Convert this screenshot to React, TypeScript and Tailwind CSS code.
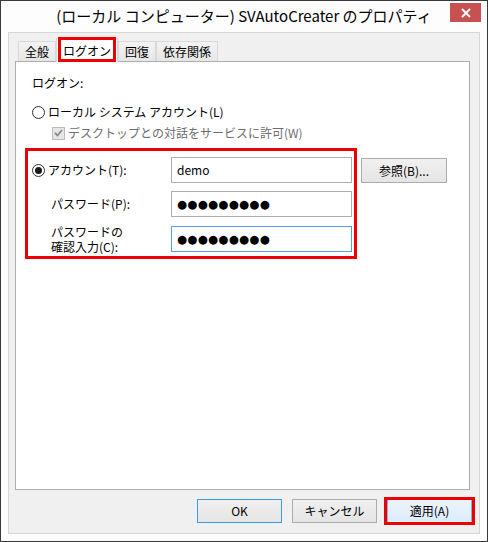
import React from "react";

const font = "font-['Noto_Sans_CJK_JP','Noto_Sans',sans-serif]";

function Radio({ checked }: { checked?: boolean }) {
  return (
    <span className="w-[13px] h-[13px] rounded-full border border-[#333333] bg-white flex items-center justify-center shrink-0">
      {checked && <span className="w-[7px] h-[7px] rounded-full bg-[#1a1a1a]" />}
    </span>
  );
}

function Tab({ label, selected }: { label: string; selected?: boolean }) {
  if (selected) {
    return (
      <div className="relative z-10 -mb-px h-[24px] bg-white border border-b-0 border-[#d9d9d9] px-[6px] flex items-center text-[12px] leading-[16px] text-black">
        {label}
        <div className="absolute left-[1px] right-[1px] top-[-2px] bottom-0 border-[3px] border-[#ee0000]" />
      </div>
    );
  }
  return (
    <div className="h-[20px] bg-gradient-to-b from-[#f3f3f3] to-[#e6e6e6] border border-b-0 border-[#d9d9d9] px-[6px] flex items-center text-[12px] leading-[16px] text-black">
      {label}
    </div>
  );
}

function Btn({ label, variant }: { label: string; variant?: "default" | "hover" }) {
  const cls =
    variant === "default"
      ? "border-[#3c9ae6] bg-gradient-to-b from-[#f0f0f0] to-[#e5e5e5]"
      : variant === "hover"
      ? "border-[#7eb4ea] bg-gradient-to-b from-[#ecf4fc] to-[#dcecfc]"
      : "border-[#acacac] bg-gradient-to-b from-[#f0f0f0] to-[#e5e5e5]";
  return (
    <div className={`w-[85px] h-[24px] border ${cls} flex items-center justify-center text-[12px] leading-[16px] text-black`}>
      {label}
    </div>
  );
}

function Input({ children, focused }: { children?: React.ReactNode; focused?: boolean }) {
  return (
    <div
      className={`w-[181px] h-[26px] border ${focused ? "border-[#569de5]" : "border-[#abadb3]"} bg-white flex items-center px-[5px] text-[12px] leading-[16px] text-black`}
    >
      {children}
    </div>
  );
}

function Dots() {
  return (
    <span className="font-['DejaVu_Sans',sans-serif] text-[11.5px] tracking-[0.3px] leading-[16px] text-black">
      ●●●●●●●●●
    </span>
  );
}

export default function App() {
  return (
    <div className={`w-[488px] h-[542px] bg-[#fdfdfd] border border-[#3a3a3a] flex flex-col ${font}`}>
      {/* title bar */}
      <div className="h-[31px] grid grid-cols-[1fr_auto_1fr]">
        <div />
        <div className="flex items-center text-[15px] leading-[20px] text-black pb-[1px]">
          (ローカル コンピューター) SVAutoCreater のプロパティ
        </div>
        <div className="flex justify-end items-start">
          <div className="mt-[2px] mr-[6px] w-[31px] h-[19px] bg-[#c75050] flex items-center justify-center">
            <svg width="10" height="10" viewBox="0 0 10 10">
              <path d="M1 1 L9 9 M9 1 L1 9" stroke="white" strokeWidth="2" />
            </svg>
          </div>
        </div>
      </div>

      {/* content */}
      <div className="mx-[7px] h-[502px] border border-[#d6d6d6] bg-[#f0f0f0] flex flex-col">
        {/* tabs */}
        <div className="mt-[5px] ml-[9px] h-[23px] flex items-end">
          <Tab label="全般" />
          <Tab label="ログオン" selected />
          <Tab label="回復" />
          <Tab label="依存関係" />
        </div>
        {/* panel */}
        <div className="ml-[6px] mr-[9px] h-[429px] border border-[#adadad] bg-white flex flex-col pt-[13px] text-[12px] leading-[16px] text-black">
          <div className="pl-[16px]">ログオン:</div>
          <div className="mt-[13px] pl-[16px] flex items-center gap-[3px]">
            <Radio />
            <span>ローカル システム アカウント(L)</span>
          </div>
          <div className="mt-[5px] pl-[36px] flex items-center gap-[3px] text-[#6d6d6d]">
            <span className="w-[13px] h-[13px] border border-[#bcbcbc] bg-[#e6e6e6] flex items-center justify-center shrink-0">
              <svg width="9" height="8" viewBox="0 0 9 8">
                <path d="M1 4 L3.5 6.5 L8 1" stroke="#8a8a8a" strokeWidth="1.8" fill="none" />
              </svg>
            </span>
            <span>デスクトップとの対話をサービスに許可(W)</span>
          </div>

          <div className="mt-[7px] ml-[9px] flex items-start">
            <div className="w-[332px] h-[111px] border-[3px] border-[#ee0000] flex flex-col pt-[6px]">
              <div className="flex items-center">
                <div className="pl-[4px] w-[143px] flex items-center gap-[3px]">
                  <Radio checked />
                  <span>アカウント(T):</span>
                </div>
                <Input>demo</Input>
              </div>
              <div className="mt-[8px] flex items-center">
                <div className="pl-[23px] w-[143px]">パスワード(P):</div>
                <Input>
                  <Dots />
                </Input>
              </div>
              <div className="mt-[7px] flex items-center">
                <div className="pl-[23px] w-[143px] leading-[15px]">
                  <div>パスワードの</div>
                  <div>確認入力(C):</div>
                </div>
                <Input focused>
                  <Dots />
                </Input>
              </div>
            </div>
            <div className="ml-[4px] mt-[10px] w-[86px] h-[25px] border border-[#acacac] bg-gradient-to-b from-[#f0f0f0] to-[#e5e5e5] flex items-center justify-center">
              参照(B)...
            </div>
          </div>
        </div>

        {/* buttons */}
        <div className="mt-[9px] mr-[7px] flex justify-end gap-[10px]">
          <Btn label="OK" variant="default" />
          <Btn label="キャンセル" />
          <div className="relative">
            <Btn label="適用(A)" variant="hover" />
            <div className="absolute left-[-3px] right-[-3px] top-[-2px] bottom-[-2px] border-[3px] border-[#ee0000]" />
          </div>
        </div>
      </div>
    </div>
  );
}
